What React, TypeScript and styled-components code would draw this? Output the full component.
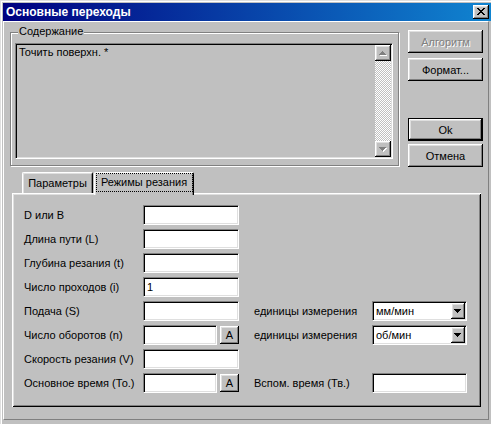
import React from 'react';
import styled, { createGlobalStyle, css } from 'styled-components';

const Global = createGlobalStyle`
  html, body { margin: 0; padding: 0; background: #c0c0c0; }
  body { font-family: "Liberation Sans", Arial, sans-serif; font-size: 11px; color: #000; }
  * { box-sizing: border-box; }
`;

const raised = css`
  background: #c0c0c0;
  box-shadow: inset -1px -1px #000, inset 1px 1px #fff, inset -2px -2px #808080, inset 2px 2px #dfdfdf;
`;

const sunken = css`
  border: 1px solid;
  border-color: #808080 #fff #fff #808080;
  box-shadow: inset 1px 1px #000, inset -1px -1px #dfdfdf;
`;

const Window = styled.div`
  width: 491px;
  height: 424px;
  background: #c0c0c0;
  box-shadow: inset 1px 1px #dfdfdf, inset 2px 2px #fff;
  padding: 3px 0 4px 3px;
  display: flex;
  flex-direction: column;
`;

const TitleBar = styled.div`
  height: 18px;
  flex: none;
  background: linear-gradient(to right, #000080, #1084d0);
  display: flex;
  align-items: center;
  justify-content: space-between;
  padding: 0 2px 0 3px;
`;

const TitleText = styled.span`
  color: #fff;
  font-weight: bold;
  font-size: 12px;
  line-height: 14px;
`;

const CloseButton = styled.div`
  width: 16px;
  height: 14px;
  ${raised};
  display: flex;
  align-items: center;
  justify-content: center;
  padding: 0 1px 1px 0;
`;

const Client = styled.div`
  flex: 1;
  margin-right: 2px;
  border: 1px solid;
  border-color: #fff #808080 #808080 #fff;
  padding-left: 6px;
  display: flex;
  flex-direction: column;
`;

const TopRow = styled.div`
  height: 150px;
  flex: none;
  display: flex;
  align-items: flex-start;
`;

const GroupBox = styled.div`
  position: relative;
  margin-top: 10px;
  width: 389px;
  height: 134px;
  border: 1px solid #808080;
  box-shadow: inset 1px 1px #fff, 1px 1px 0 #fff;
  padding: 10px 0 0 4px;
`;

const GroupLegend = styled.span`
  position: absolute;
  top: -8px;
  left: 7px;
  padding: 0 1px;
  line-height: 13px;
  background: #c0c0c0;
`;

const ListBox = styled.div`
  width: 378px;
  height: 116px;
  ${sunken};
  padding: 1px;
  background: #c0c0c0;
  display: flex;
`;

const ListContent = styled.div`
  flex: 1;
  padding: 1px 0 0 2px;
  line-height: 13px;
`;

const ScrollBar = styled.div`
  width: 16px;
  display: flex;
  flex-direction: column;
`;

const ScrollTrack = styled.div`
  flex: 1;
  background: repeating-conic-gradient(#c0c0c0 0 25%, #fff 0 50%) 0 0 / 2px 2px;
`;

const ArrowButton = styled.div<{ $w: number; $h: number }>`
  width: ${(p) => p.$w}px;
  height: ${(p) => p.$h}px;
  flex: none;
  ${raised};
  display: flex;
  align-items: center;
  justify-content: center;
`;

const ButtonColumn = styled.div`
  margin: 8px 0 0 9px;
  display: flex;
  flex-direction: column;
`;

const PushButton = styled.div<{ $disabled?: boolean; $default?: boolean; $gap?: number }>`
  width: 75px;
  height: 23px;
  margin-top: ${(p) => p.$gap ?? 0}px;
  ${raised};
  ${(p) =>
    p.$default &&
    css`
      box-shadow: inset 1px 1px #000, inset -1px -1px #000, inset -2px -2px #000, inset 2px 2px #fff,
        inset -3px -3px #808080, inset 3px 3px #dfdfdf;
    `}
  display: flex;
  align-items: center;
  justify-content: center;
  color: ${(p) => (p.$disabled ? '#808080' : '#000')};
  text-shadow: ${(p) => (p.$disabled ? '1px 1px 0 #fff' : 'none')};
`;

const TabControl = styled.div`
  margin-left: 2px;
  width: 469px;
  display: flex;
  flex-direction: column;
`;

const TabStrip = styled.div`
  height: 21px;
  display: flex;
  align-items: flex-end;
  padding-left: 10px;
`;

const Tab = styled.div<{ $active?: boolean; $w: number; $gap?: number }>`
  position: relative;
  z-index: ${(p) => (p.$active ? 1 : 0)};
  width: ${(p) => p.$w}px;
  height: ${(p) => (p.$active ? 23 : 21)}px;
  margin-bottom: ${(p) => (p.$active ? -2 : 0)}px;
  margin-left: ${(p) => p.$gap ?? 0}px;
  flex: none;
  background: #c0c0c0;
  border-top: 1px solid #fff;
  border-left: 1px solid #fff;
  border-right: 1px solid #000;
  border-radius: 2px 2px 0 0;
  box-shadow: inset 1px 1px #dfdfdf, inset -1px 0 #808080;
  display: flex;
  align-items: flex-start;
  justify-content: center;
  padding-top: ${(p) => (p.$active ? 0 : 4)}px;
`;

const FocusLabel = styled.span`
  display: block;
  width: 97px;
  height: 19px;
  border: 1px dotted #000;
  line-height: 17px;
  text-align: center;
`;

const TabPanel = styled.div`
  height: 214px;
  background: #c0c0c0;
  box-shadow: inset 1px 1px #fff, inset -1px -1px #000, inset 2px 2px #dfdfdf, inset -2px -2px #808080;
  padding: 12px 0 0 12px;
`;

const FormGrid = styled.div`
  display: grid;
  grid-template-columns: 119px 96px 15px 118px 95px;
  grid-auto-rows: 20px;
  row-gap: 4px;
`;

const Label = styled.div<{ $col: number; $row: number }>`
  grid-column: ${(p) => p.$col};
  grid-row: ${(p) => p.$row};
  display: flex;
  align-items: center;
  white-space: nowrap;
  padding-bottom: 1px;
`;

const Cell = styled.div<{ $col: number; $row: number }>`
  grid-column: ${(p) => p.$col};
  grid-row: ${(p) => p.$row};
  display: flex;
  align-items: center;
`;

const TextField = styled.input<{ $w: number }>`
  width: ${(p) => p.$w}px;
  height: 20px;
  ${sunken};
  background: #fff;
  margin: 0;
  padding: 0 0 0 3px;
  font-family: "Liberation Sans", Arial, sans-serif;
  font-size: 11px;
  color: #000;
  outline: none;
`;

const SmallButton = styled.div`
  width: 19px;
  height: 18px;
  margin-left: 3px;
  ${raised};
  display: flex;
  align-items: center;
  justify-content: center;
  padding-bottom: 1px;
`;

const Combo = styled.div`
  width: 95px;
  height: 20px;
  ${sunken};
  background: #fff;
  padding: 1px 1px 1px 1px;
  display: flex;
  align-items: stretch;
`;

const ComboText = styled.span`
  flex: 1;
  padding-left: 2px;
  display: flex;
  align-items: center;
`;

type Dir = 'up' | 'down';

const Triangle: React.FC<{ dir: Dir; color: string; shadow?: string }> = ({ dir, color, shadow }) => {
  const rows = [
    { x: 3, w: 1 },
    { x: 2, w: 3 },
    { x: 1, w: 5 },
    { x: 0, w: 7 },
  ];
  const ordered = dir === 'up' ? rows : [...rows].reverse();
  return (
    <svg width={8} height={5} viewBox="0 0 8 5" shapeRendering="crispEdges">
      {shadow &&
        ordered.map((r, i) => (
          <rect key={`s${i}`} x={r.x + 1} y={i + 1} width={r.w} height={1} fill={shadow} />
        ))}
      {ordered.map((r, i) => (
        <rect key={i} x={r.x} y={i} width={r.w} height={1} fill={color} />
      ))}
    </svg>
  );
};

const CloseGlyph: React.FC = () => {
  const rows = [
    [0, 1, 6, 7],
    [1, 2, 5, 6],
    [2, 3, 4, 5],
    [3, 4],
    [2, 3, 4, 5],
    [1, 2, 5, 6],
    [0, 1, 6, 7],
  ];
  return (
    <svg width={8} height={7} viewBox="0 0 8 7" shapeRendering="crispEdges">
      {rows.map((cols, y) =>
        cols.map((x) => <rect key={`${x}-${y}`} x={x} y={y} width={1} height={1} fill="#000" />)
      )}
    </svg>
  );
};

const leftRows: { label: string; value?: string; auto?: boolean }[] = [
  { label: 'D или B' },
  { label: 'Длина пути (L)' },
  { label: 'Глубина резания (t)' },
  { label: 'Число проходов (i)', value: '1' },
  { label: 'Подача (S)' },
  { label: 'Число оборотов (n)', auto: true },
  { label: 'Скорость резания (V)' },
  { label: 'Основное время (То.)', auto: true },
];

export default function App() {
  return (
    <>
      <Global />
      <Window>
        <TitleBar>
          <TitleText>Основные переходы</TitleText>
          <CloseButton>
            <CloseGlyph />
          </CloseButton>
        </TitleBar>
        <Client>
          <TopRow>
            <GroupBox>
              <GroupLegend>Содержание</GroupLegend>
              <ListBox>
                <ListContent>Точить поверхн. *</ListContent>
                <ScrollBar>
                  <ArrowButton $w={16} $h={16}>
                    <Triangle dir="up" color="#808080" shadow="#fff" />
                  </ArrowButton>
                  <ScrollTrack />
                  <ArrowButton $w={16} $h={16}>
                    <Triangle dir="down" color="#808080" shadow="#fff" />
                  </ArrowButton>
                </ScrollBar>
              </ListBox>
            </GroupBox>
            <ButtonColumn>
              <PushButton $disabled>Алгоритм</PushButton>
              <PushButton $gap={5}>Формат...</PushButton>
              <PushButton $gap={37} $default>
                Ok
              </PushButton>
              <PushButton $gap={3}>Отмена</PushButton>
            </ButtonColumn>
          </TopRow>
          <TabControl>
            <TabStrip>
              <Tab $w={71}>Параметры</Tab>
              <Tab $w={100} $gap={1} $active>
                <FocusLabel>Режимы резания</FocusLabel>
              </Tab>
            </TabStrip>
            <TabPanel>
              <FormGrid>
                {leftRows.map((r, i) => (
                  <React.Fragment key={r.label}>
                    <Label $col={1} $row={i + 1}>
                      {r.label}
                    </Label>
                    <Cell $col={2} $row={i + 1}>
                      <TextField $w={r.auto ? 74 : 96} defaultValue={r.value ?? ''} />
                      {r.auto && <SmallButton>A</SmallButton>}
                    </Cell>
                  </React.Fragment>
                ))}
                <Label $col={4} $row={5}>
                  единицы измерения
                </Label>
                <Cell $col={5} $row={5}>
                  <Combo>
                    <ComboText>мм/мин</ComboText>
                    <ArrowButton $w={14} $h={16}>
                      <Triangle dir="down" color="#000" />
                    </ArrowButton>
                  </Combo>
                </Cell>
                <Label $col={4} $row={6}>
                  единицы измерения
                </Label>
                <Cell $col={5} $row={6}>
                  <Combo>
                    <ComboText>об/мин</ComboText>
                    <ArrowButton $w={14} $h={16}>
                      <Triangle dir="down" color="#000" />
                    </ArrowButton>
                  </Combo>
                </Cell>
                <Label $col={4} $row={8}>
                  Вспом. время (Тв.)
                </Label>
                <Cell $col={5} $row={8}>
                  <TextField $w={95} defaultValue="" />
                </Cell>
              </FormGrid>
            </TabPanel>
          </TabControl>
        </Client>
      </Window>
    </>
  );
}
